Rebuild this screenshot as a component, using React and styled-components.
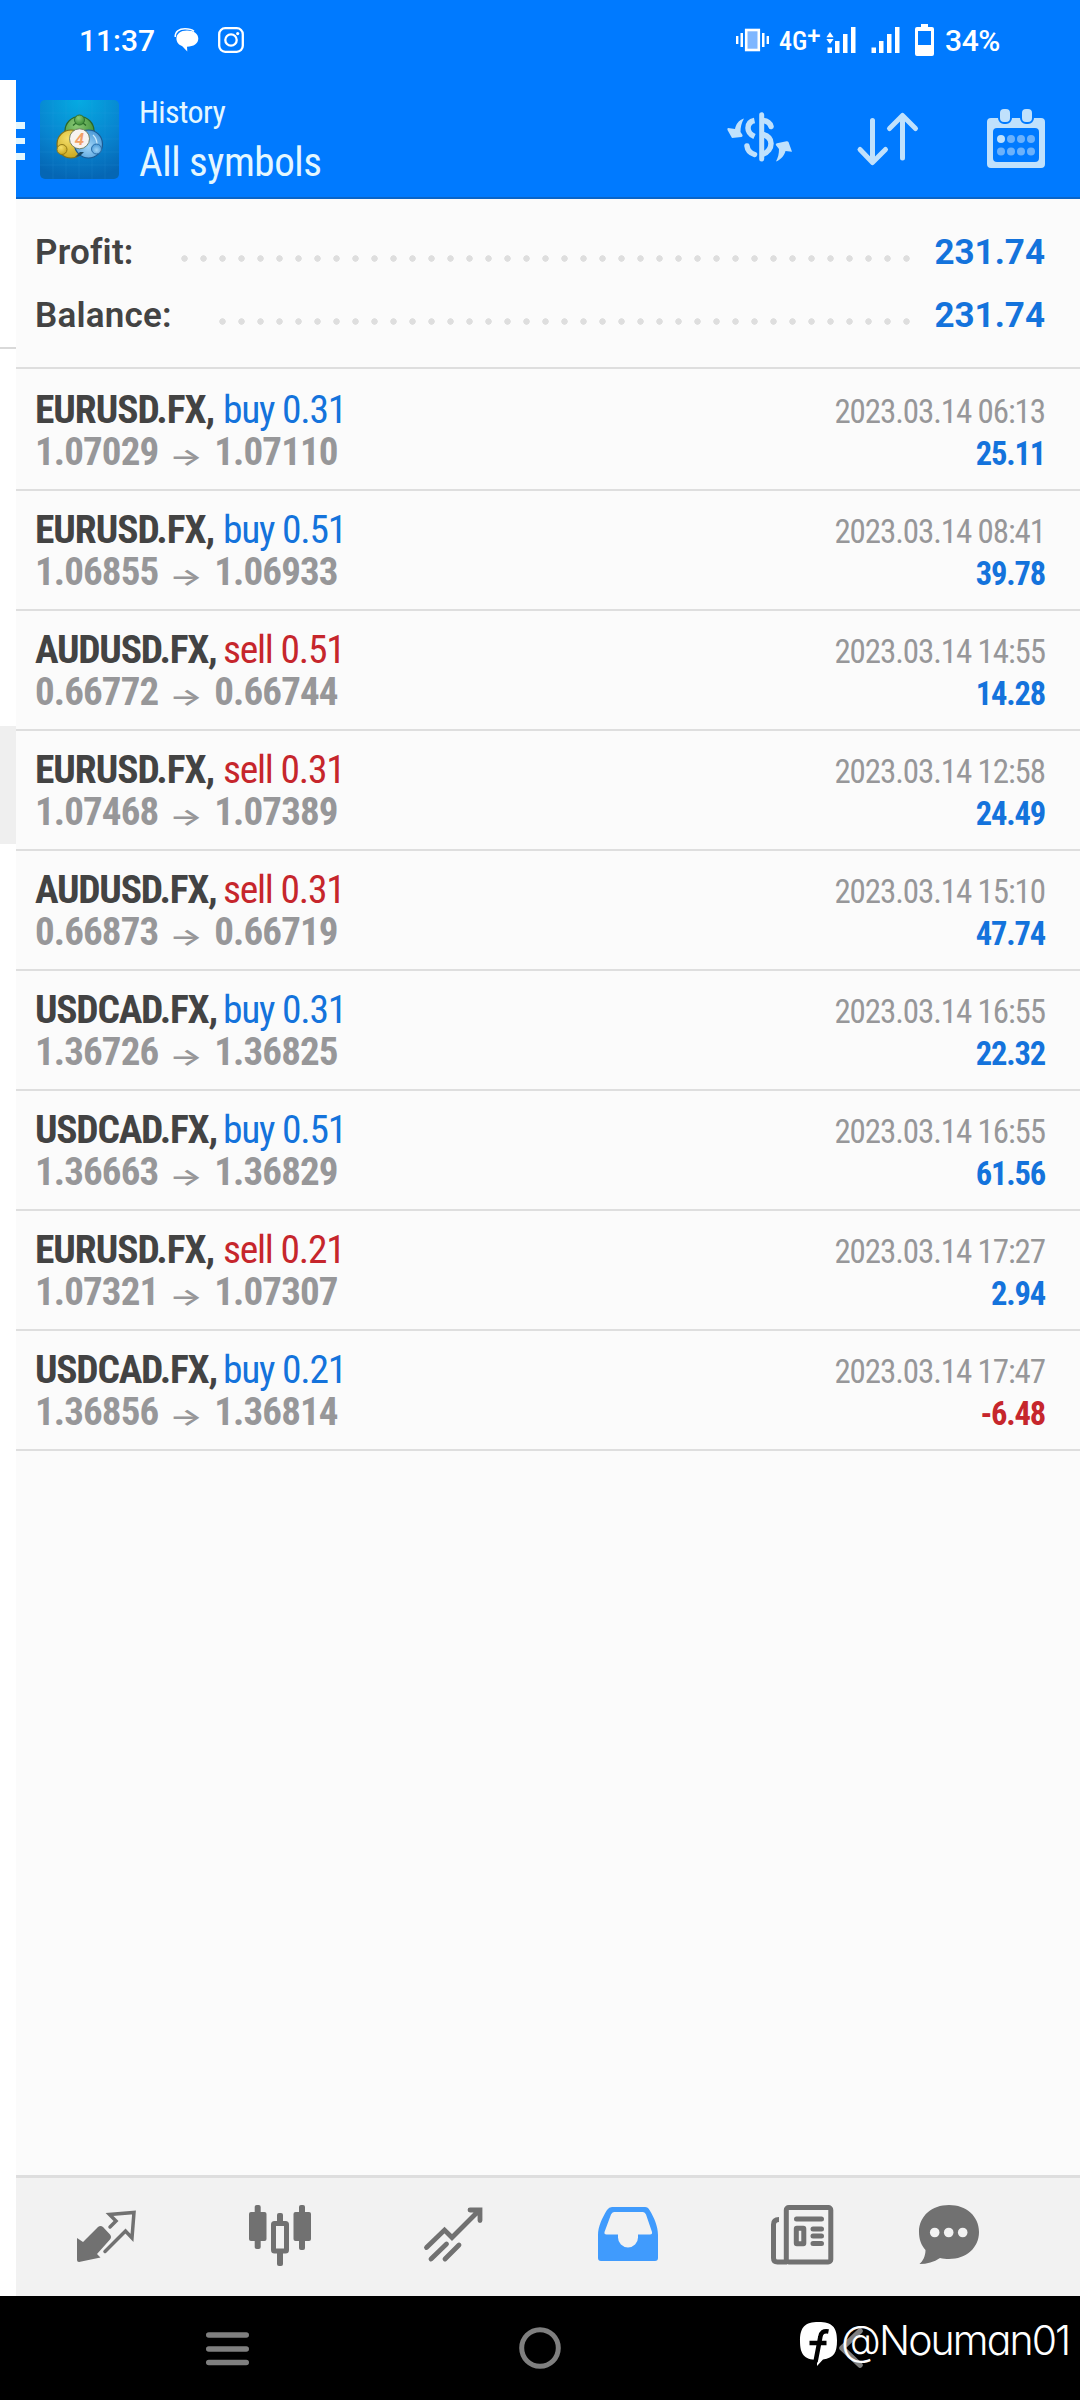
import React from "react";
import styled, { createGlobalStyle } from "styled-components";

const Global = createGlobalStyle`
  html, body { margin: 0; padding: 0; background: #000; }
  * { box-sizing: border-box; }
  body { font-family: Roboto, "Liberation Sans", sans-serif; }
  svg { display: block; flex: none; overflow: visible; }
`;

const blue = "#007aff";
const icon = "#717171";

const Screen = styled.div`
  width: 1080px;
  height: 2400px;
  display: flex;
  flex-direction: column;
  overflow: hidden;
`;

const StatusBar = styled.header`
  height: 80px;
  flex: none;
  display: flex;
  justify-content: space-between;
  align-items: center;
  padding: 0 80px 0 79px;
  background: ${blue};
  color: #fff;
`;
const StatusGroup = styled.div`
  display: flex;
  align-items: center;
  gap: ${(p) => p.$gap}px;
`;
const StatusText = styled.span`
  font-size: 30px;
  font-weight: 500;
  line-height: 40px;
  margin-top: 2px;
  margin-left: ${(p) => p.$pull || 0}px;
  letter-spacing: ${(p) => p.$spacing || 0}px;
`;
const Network = styled.span`
  width: 41px;
  margin: 2px 7px 0 10px;
  font-size: 26px;
  font-weight: 500;
  font-stretch: 75%;
  line-height: 40px;
  white-space: nowrap;
  display: flex;
`;
const Plus = styled.span`
  font-size: 24px;
  margin-top: -5px;
  font-stretch: 90%;
`;

const Main = styled.div`
  height: 2216px;
  flex: none;
  display: flex;
`;
const Drawer = styled.aside`
  width: 16px;
  flex: none;
  background: #fff;
  display: flex;
  flex-direction: column;
  padding-top: 267px;
`;
const DrawerLine = styled.div`
  height: 2px;
  background: #d9d9d9;
`;
const DrawerItem = styled.div`
  height: 118px;
  margin-top: 377px;
  background: #efefef;
`;
const Panel = styled.main`
  flex: 1;
  display: flex;
  flex-direction: column;
  background: #fbfbfb;
`;

const AppBar = styled.div`
  height: 119px;
  flex: none;
  display: flex;
  background: ${blue};
  border-bottom: 2px solid #0a65c8;
  color: #e4f7ff;
`;
const Burger = styled.div`
  width: 9px;
  margin: 42px 15px 0 0;
  display: flex;
  flex-direction: column;
  gap: 9px;
`;
const BurgerBar = styled.i`
  height: 6.5px;
  background: #e4f7ff;
`;
const Logo = styled.div`
  width: 79px;
  height: 79px;
  margin-top: 20px;
`;
const Titles = styled.div`
  margin: 12px 0 0 20px;
  flex: 1;
`;
const Subtitle = styled.div`
  font-size: 32px;
  line-height: 40px;
  font-stretch: 75%;
  letter-spacing: -0.6px;
`;
const Title = styled.div`
  font-size: 41px;
  line-height: 58px;
  margin-top: 1px;
  font-stretch: 75%;
  letter-spacing: -0.45px;
`;
const Actions = styled.div`
  display: flex;
  gap: 64px;
  padding: 28px 35px 0 0;
`;
const CalendarSlot = styled.div`
  margin-left: 5px;
`;

const Summary = styled.section`
  padding: 22px 35px 0 19px;
  height: 170px;
  flex: none;
  border-bottom: 2px solid #dedede;
`;
const SummaryRow = styled.div`
  height: 63px;
  display: flex;
  align-items: center;
  font-size: 35px;
  font-weight: 700;
  line-height: 50px;
`;
const SummaryLabel = styled.span`
  color: #434343;
  font-weight: 650;
  letter-spacing: 0.2px;
`;
const Leader = styled.span`
  flex: 1;
  height: 19px;
  margin: 12px 19px 0 41px;
  background: radial-gradient(circle at center, #dedede 2.9px, transparent 3.5px) left center / 19px 19px repeat-x;
`;
const SummaryValue = styled.span`
  color: #1473dc;
`;

const Deals = styled.section`
  padding-top: 2px;
  flex: 1;
`;
const Deal = styled.article`
  height: 120px;
  border-bottom: 2px solid #dedede;
  padding: 18px 35px 0 19px;
  display: flex;
  justify-content: space-between;
`;
const Col = styled.div`
  display: flex;
  flex-direction: column;
  align-items: ${(p) => (p.$end ? "flex-end" : "flex-start")};
  padding-top: ${(p) => (p.$end ? 2 : 0)}px;
`;
const Line = styled.div`
  height: 42px;
  line-height: 42px;
  font-size: ${(p) => p.$size}px;
  font-weight: ${(p) => p.$weight || 400};
  letter-spacing: ${(p) => p.$spacing}px;
  color: ${(p) => p.$color};
  font-stretch: 75%;
  white-space: pre;
  display: flex;
`;
const SymbolName = styled.span`
  width: 188px;
  flex: none;
`;
const Side = styled.span`
  font-weight: 400;
  letter-spacing: -1.25px;
  color: ${(p) => (p.$sell ? "#c6262c" : "#1473dc")};
`;
const Arrow = styled.span`
  font-family: Inter, "DejaVu Sans", sans-serif;
  font-size: 26px;
  font-weight: 600;
  width: 56px;
  text-align: center;
  letter-spacing: 0;
  padding-top: 5px;
  transform: scale(1.35, 0.9);
`;

const TabBar = styled.nav`
  height: 121px;
  flex: none;
  border-top: 3px solid #dedede;
  background: #f2f2f2;
  padding: 27px 0 0 61px;
  display: grid;
  grid-template-columns: 172px 175px 174px 173px 148px 1fr;
`;

const NavBar = styled.footer`
  flex: 1;
  background: #000;
  display: grid;
  grid-template-columns: 206px 313px 281px 1fr;
  align-items: start;
`;
const NavSlot = styled.div`
  padding-top: ${(p) => p.$top}px;
`;
const Watermark = styled.div`
  display: flex;
  position: relative;
  padding-top: 26px;
`;
const Back = styled.div`
  position: absolute;
  left: 39px;
  top: 31px;
`;
const Handle = styled.span`
  position: relative;
  margin-left: 3px;
  font-family: Inter, "Liberation Sans", sans-serif;
  font-size: 41px;
  line-height: 50px;
  font-weight: 350;
  letter-spacing: -1.9px;
  font-feature-settings: "cv11";
  color: #fff;
  margin-top: -7px;
  white-space: nowrap;
`;

const ChatSmall = () => (
  <svg width="25" height="24" viewBox="0 0 25 24">
    <path d="M1.200 9C1 3.500 5 .8 11 .8c4 0 7 .8 9 2.600" fill="none" stroke="#fff" strokeWidth="1.500" />
    <path d="M13 2.400c7 0 11.300 3.300 11.300 8.200 0 5-4.600 8.200-11.300 8.200l.3 4.600-5-5.200C4.800 17 2.400 14.300 2.400 10.600 2.400 5.600 6.500 2.400 13 2.400z" fill="#fff" />
  </svg>
);
const Insta = () => (
  <svg width="26" height="26" viewBox="0 0 26 26" fill="none" stroke="#fff" strokeWidth="2.300">
    <rect x="1.200" y="1.200" width="23.600" height="23.600" rx="6" />
    <circle cx="13" cy="13" r="5.700" />
    <circle cx="19.700" cy="6.600" r="1.600" fill="#fff" stroke="none" />
  </svg>
);
const Vibrate = () => (
  <svg width="33" height="24" viewBox="0 0 33 24" fill="#fff">
    <rect x="0" y="8" width="2.400" height="8" />
    <rect x="4.500" y="5" width="2.500" height="14" />
    <rect x="10.200" y="2" width="12.600" height="20" fill="#7fb6ff" stroke="#fff" strokeWidth="2.600" />
    <rect x="26" y="5" width="2.500" height="14" />
    <rect x="30.600" y="8" width="2.400" height="8" />
  </svg>
);
const Signal = ({ data }) => (
  <svg width="29" height="26" viewBox="0 0 29 26" fill="#fff">
    <rect x="0.500" y="20.500" width="4.500" height="5.500" />
    <rect x="8" y="14" width="4.500" height="12" />
    <rect x="16" y="7" width="4.500" height="19" />
    <rect x="24" y="0" width="4.500" height="26" />
    {data && <path d="M-.6 10.300L3 5l3.600 5.300zM-.6 12L3 17l3.600-5z" />}
  </svg>
);
const Battery = () => (
  <svg width="19" height="32" viewBox="0 0 19 32">
    <path fillRule="evenodd" fill="#fff" d="M6 0h7v3h4a2 2 0 0 1 2 2v25a2 2 0 0 1-2 2H2a2 2 0 0 1-2-2V5a2 2 0 0 1 2-2h4zM3 7v14h13V7z" />
  </svg>
);

const MetaLogo = () => (
  <svg width="79" height="79" viewBox="0 0 79 79">
    <defs>
      <radialGradient id="bg" cx=".5" cy="0" r="1">
        <stop offset="0" stopColor="#05abe2" />
        <stop offset=".6" stopColor="#0884cf" />
        <stop offset="1" stopColor="#0566b4" />
      </radialGradient>
      <radialGradient id="gr" cx=".4" cy=".3" r=".8">
        <stop offset="0" stopColor="#8ccb77" />
        <stop offset="1" stopColor="#2f842d" />
      </radialGradient>
      <radialGradient id="ye" cx=".4" cy=".3" r=".8">
        <stop offset="0" stopColor="#f5df6a" />
        <stop offset="1" stopColor="#c3a016" />
      </radialGradient>
      <radialGradient id="bl" cx=".5" cy=".6" r=".7">
        <stop offset="0" stopColor="#9fd4f7" />
        <stop offset="1" stopColor="#3b8fd2" />
      </radialGradient>
    </defs>
    <rect width="79" height="79" rx="5" fill="url(#bg)" />
    <path d="M13 0v79M26 0v79M39 0v79M52 0v79M65 0v79M0 13h79M0 26h79M0 39h79M0 52h79M0 65h79" stroke="#3aa9e6" strokeOpacity=".15" strokeWidth="1" />
    <g strokeWidth="1.200">
      <circle cx="39.500" cy="31" r="14.500" fill="url(#gr)" stroke="#2c6628" />
      <circle cx="31" cy="44" r="14" fill="url(#ye)" stroke="#7f6e18" />
      <circle cx="48.500" cy="44" r="14" fill="url(#bl)" stroke="#1b5a92" />
      <path d="M33 25.500a8.500 8.500 0 0 1 13 0" fill="none" stroke="#2a6d2a" />
      <path d="M53 35a13 13 0 0 1 4 9" fill="none" stroke="#cbe9fb" />
    </g>
    <path d="M40 52l-5 5 5-1 4-4z" fill="#1d4b66" />
    <circle cx="39.500" cy="20" r="5" fill="url(#gr)" stroke="#2f7430" />
    <circle cx="22" cy="49.500" r="5" fill="url(#ye)" stroke="#917a17" />
    <circle cx="56.500" cy="49" r="5" fill="url(#bl)" stroke="#2a6eaa" />
    <circle cx="39.500" cy="38.800" r="10" fill="#f8f3f0" stroke="#6b7a5c" strokeWidth=".9" />
    <text x="39.500" y="45" fontSize="17" fontStyle="italic" fontWeight="600" fontFamily="Roboto, sans-serif" textAnchor="middle" fill="#f2a066">4</text>
  </svg>
);

const Dollar = () => (
  <svg width="66" height="64" viewBox="0 0 66 64" fill="#c0e1fc">
    <path d="M17 10.500C11.500 12 9 16.500 8 21L1 20q-1 .5-.5 2L5 30l9.500-1q1.500-.5 1-2L13.500 24c0-5 1-9 3.500-13.500z" />
    <path d="M49 53.500c5.500-2 8.500-6.500 9.500-10.500l6.500.8L61.500 34q-.5-1-2-.8l-9.500 2q-2 .5-1 2L52 41c0 5-1 8.500-3 12.500z" />
    <g fill="none" stroke="#c0e1fc" strokeLinecap="butt" strokeWidth="5.500">
      <path d="M34.700 6.700v44.300" strokeWidth="5" strokeLinecap="round" />
      <path d="M27.500 12.500c-5 1-6.500 4-6.500 7.500s2 6.500 6.500 8.500" />
      <path d="M27.500 46.500c-4.500-1.500-7-4-7.500-8.500" strokeLinecap="round" />
      <path d="M36 12.500c4.500.5 7 2.500 8 6" strokeLinecap="round" />
      <path d="M36 26.500c5 1.500 8 4.500 8 9s-3 9-8 10.500" />
    </g>
  </svg>
);
const SortArrows = () => (
  <svg width="61" height="64" viewBox="0 0 61 64" fill="none" stroke="#c0e1fc" strokeWidth="5" strokeLinecap="round" strokeLinejoin="round">
    <path d="M15.500 12.500V54M3 41.500L15.500 54.500 28.500 41.500" />
    <path d="M45.500 50V8M32.500 20.500l13-13 13 13" />
  </svg>
);
const CalendarIcon = () => (
  <svg width="58" height="64" viewBox="0 0 58 64">
    <path fillRule="evenodd" fill="#c0e1fc" d="M4 10h50a4 4 0 0 1 4 4v42a4 4 0 0 1-4 4H4a4 4 0 0 1-4-4V14a4 4 0 0 1 4-4zm6 10a4 4 0 0 0-4 4v26a4 4 0 0 0 4 4h38a4 4 0 0 0 4-4V24a4 4 0 0 0-4-4z" />
    <g fill="#c0e1fc" stroke={blue} strokeWidth="2">
      <rect x="12" y="0" width="12" height="15" rx="5" />
      <rect x="34" y="0" width="12" height="15" rx="5" />
    </g>
    {[0, 1].map((r) => [0, 1, 2, 3].map((c) => (
      <circle key={`${r}${c}`} cx={14 + c * 10} cy={31 + r * 12.500} r="4" fill={r + c === 0 ? "#c0e1fc" : "#6bb1fb"} />
    )))}
  </svg>
);

const TradeIcon = () => (
  <svg width="60" height="62" viewBox="0 0 60 62">
    <path fill={icon} d="M0 33l6 4 15-15q2.500-2 5 0l7 7.500q2 2.500 0 5L20 49l3.500 3.500L2 57q-2 0-2-2z" />
    <path fill="none" stroke={icon} strokeWidth="3.500" strokeLinecap="round" strokeLinejoin="miter" d="M33 22l6-6-6.500-6.500 24.500-2-2 25.500-6.500-7L28 46.500" />
  </svg>
);
const CandlesIcon = () => (
  <svg width="62" height="62" viewBox="0 0 62 62" fill={icon}>
    <rect x="5.700" y="0" width="6" height="44" rx="2" />
    <rect x="0" y="7" width="17.500" height="29" rx="2" />
    <rect x="50" y="0" width="6" height="45" rx="2" />
    <rect x="44.500" y="7" width="17.500" height="29" rx="2" />
    <rect x="28" y="8" width="6" height="11" rx="2" />
    <rect x="28" y="46" width="6" height="15" rx="2" />
    <rect x="24.500" y="18.500" width="13" height="27.500" rx="1" fill="none" stroke={icon} strokeWidth="5" />
  </svg>
);
const TrendIcon = () => (
  <svg width="60" height="62" viewBox="0 0 60 62" fill="none" stroke={icon} strokeWidth="4.800" strokeLinecap="round" strokeLinejoin="miter">
    <path d="M2.500 42.500L20.500 25l7.500 7.500L55 5.500M46 5h10v10.500M7 54l15.500-15M21 54l14-14" />
  </svg>
);
const InboxIcon = () => (
  <svg width="60" height="62" viewBox="0 0 60 62">
    <path fillRule="evenodd" fill="#409bfd" d="M14 2h33q3 0 4.500 3c5 8 8.500 17 8.500 25v23q0 3-3 3H3q-3 0-3-3V30C0 22 4 13 9 5q2-3 5-3zm2 5q-2 0-3 2.500L6.500 27q-.5 2.500 2 2.500H20v3a10 10 0 0 0 20 0v-3h12q2.500 0 2-2.500L48 9.500Q47 7 45 7z" />
  </svg>
);
const NewsIcon = () => (
  <svg width="62" height="62" viewBox="0 0 62 62" fill="none" stroke={icon} strokeWidth="5" strokeLinecap="round">
    <rect x="15.300" y="2.500" width="44.500" height="54.500" rx="2.500" />
    <path d="M8 14.500q-5.500 0-5.500 5V53q0 4 4 4H16" strokeLinecap="butt" />
    <path d="M25.500 14h25M42 24h8.500M42 31h8.500M42 38.500h8.500" />
    <rect x="25.300" y="23.300" width="7.500" height="15.500" rx=".5" />
  </svg>
);
const ChatIcon = () => (
  <svg width="60" height="62" viewBox="0 0 60 62">
    <path fill={icon} d="M30 0c17 0 30 11 30 27S47 54 30 54c-3 0-6-.2-9-1-6 4-13 6-20.500 6C4 56 6.500 51 6.500 45 2 40 0 34 0 27 0 11 13 0 30 0z" />
    <g fill="#f2f2f2"><circle cx="15.700" cy="27.500" r="4.800" /><circle cx="29.700" cy="27.500" r="4.800" /><circle cx="43.700" cy="27.500" r="4.800" /></g>
  </svg>
);
const FacebookMark = () => (
  <svg width="38" height="44" viewBox="0 0 38 44">
    <path fill="#fff" d="M18.500 0C32 0 37 5 37 18.500c0 12-3 17.500-14 19L17 44v-6C4 37.500 0 32 0 19 0 5 5 0 18.500 0z" />
    <path fill="none" stroke="#000" strokeWidth="4.500" d="M28.500 9.500c-5-1-7.500 1-8.200 5.500L15.500 40M9.500 21h17" />
  </svg>
);

const deals = [
  ["EURUSD.FX", "buy 0.31", "1.07029", "1.07110", "2023.03.14 06:13", "25.11"],
  ["EURUSD.FX", "buy 0.51", "1.06855", "1.06933", "2023.03.14 08:41", "39.78"],
  ["AUDUSD.FX", "sell 0.51", "0.66772", "0.66744", "2023.03.14 14:55", "14.28"],
  ["EURUSD.FX", "sell 0.31", "1.07468", "1.07389", "2023.03.14 12:58", "24.49"],
  ["AUDUSD.FX", "sell 0.31", "0.66873", "0.66719", "2023.03.14 15:10", "47.74"],
  ["USDCAD.FX", "buy 0.31", "1.36726", "1.36825", "2023.03.14 16:55", "22.32"],
  ["USDCAD.FX", "buy 0.51", "1.36663", "1.36829", "2023.03.14 16:55", "61.56"],
  ["EURUSD.FX", "sell 0.21", "1.07321", "1.07307", "2023.03.14 17:27", "2.94"],
  ["USDCAD.FX", "buy 0.21", "1.36856", "1.36814", "2023.03.14 17:47", "-6.48"],
];

const tabs = [TradeIcon, CandlesIcon, TrendIcon, InboxIcon, NewsIcon, ChatIcon];

export default function App() {
  return (
    <Screen>
      <Global />
      <StatusBar>
        <StatusGroup $gap={19}>
          <StatusText>11:37</StatusText>
          <ChatSmall />
          <Insta />
        </StatusGroup>
        <StatusGroup $gap={0}>
          <Vibrate />
          <Network>4G<Plus>+</Plus></Network>
          <StatusGroup $gap={15}>
            <Signal data />
            <Signal />
            <Battery />
            <StatusText $spacing={-0.4} $pull={-4}>34%</StatusText>
          </StatusGroup>
        </StatusGroup>
      </StatusBar>
      <Main>
        <Drawer>
          <DrawerLine />
          <DrawerItem />
        </Drawer>
        <Panel>
          <AppBar>
            <Burger><BurgerBar /><BurgerBar /><BurgerBar /></Burger>
            <Logo><MetaLogo /></Logo>
            <Titles>
              <Subtitle>History</Subtitle>
              <Title>All symbols</Title>
            </Titles>
            <Actions>
              <Dollar />
              <SortArrows />
              <CalendarSlot><CalendarIcon /></CalendarSlot>
            </Actions>
          </AppBar>
          <Summary>
            {["Profit:", "Balance:"].map((label) => (
              <SummaryRow key={label}>
                <SummaryLabel>{label}</SummaryLabel>
                <Leader />
                <SummaryValue>231.74</SummaryValue>
              </SummaryRow>
            ))}
          </Summary>
          <Deals>
            {deals.map(([symbol, side, open, close, time, profit]) => (
              <Deal key={open}>
                <Col>
                  <Line $size={39.5} $weight={700} $spacing={symbol[0] === "E" ? -1.05 : -1.25} $color="#434343">
                    <SymbolName>{symbol},</SymbolName>
                    <Side $sell={side.startsWith("sell")}>{side}</Side>
                  </Line>
                  <Line $size={39} $weight={700} $spacing={-0.9} $color="#979799">
                    <span>{open}</span><Arrow>→</Arrow><span>{close}</span>
                  </Line>
                </Col>
                <Col $end>
                  <Line $size={33} $spacing={-1.1} $color="#979799">{time}</Line>
                  <Line $size={32.5} $weight={700} $spacing={-1.2} $color={profit.startsWith("-") ? "#c6262c" : "#1473dc"}>{profit}</Line>
                </Col>
              </Deal>
            ))}
          </Deals>
          <TabBar>
            {tabs.map((Icon, i) => <Icon key={i} />)}
          </TabBar>
        </Panel>
      </Main>
      <NavBar>
        <div />
        <NavSlot $top={36}>
          <svg width="43" height="34" viewBox="0 0 43 34" stroke="#7f7f7f" strokeWidth="5.600" strokeLinecap="round">
            <path d="M2.800 3h37.400M2.800 17h37.400M2.800 30.500h37.400" />
          </svg>
        </NavSlot>
        <NavSlot $top={31}>
          <svg width="42" height="42" viewBox="0 0 42 42" fill="none" stroke="#7f7f7f" strokeWidth="5">
            <circle cx="21" cy="21" r="18.300" />
          </svg>
        </NavSlot>
        <Watermark>
          <Back>
            <svg width="24" height="42" viewBox="0 0 24 42" fill="none" stroke="#7f7f7f" strokeWidth="5.500" strokeLinecap="round" strokeLinejoin="round">
              <path d="M21 4L3 21l18 17" />
            </svg>
          </Back>
          <FacebookMark />
          <Handle>@Nouman01</Handle>
        </Watermark>
      </NavBar>
    </Screen>
  );
}
